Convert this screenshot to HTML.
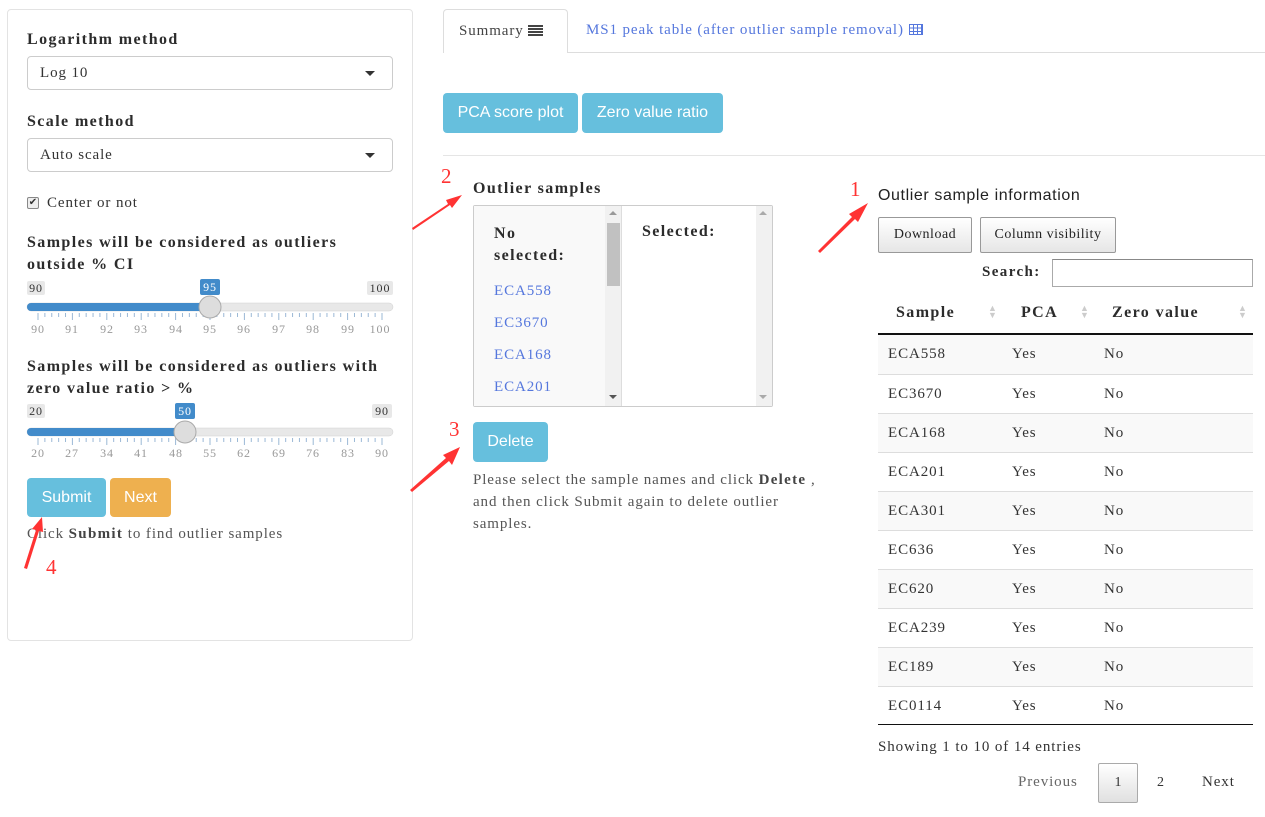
<!DOCTYPE html>
<html><head><meta charset="utf-8"><style>
*{box-sizing:border-box;margin:0;padding:0}
body{width:1265px;height:817px;background:#fff;font-family:"Liberation Serif",serif;color:#333;position:relative;overflow:hidden;font-size:15px;letter-spacing:0.9px}
.a{position:absolute;white-space:nowrap}
.b{font-weight:bold;color:#2c2c2c;font-size:16px;letter-spacing:1.4px}
.sel{position:absolute;left:27px;width:366px;height:34px;border:1px solid #ccc;border-radius:4px;padding:8px 12px;font-size:15px}
.sel:after{content:"";position:absolute;right:17px;top:14px;border:5px solid transparent;border-top:5px solid #333}
.btn{position:absolute;background:#66bfdd;color:#fff;font-family:"Liberation Sans",sans-serif;font-size:16px;border-radius:4px;text-align:center;letter-spacing:0}
.gb{position:absolute;border:1px solid #999;border-radius:2px;background:linear-gradient(#fff,#e6e6e6);font-size:14px;text-align:center;line-height:34px;color:#222;letter-spacing:0.5px}
.row{position:absolute;left:878px;width:375px;height:39px;border-top:1px solid #ddd;font-size:15px}
.row span{position:absolute;top:11px}
.link{color:#5577dd}
</style></head><body>
<!-- left panel -->
<div class="a" style="left:7px;top:9px;width:406px;height:632px;border:1px solid #e3e3e3;border-radius:4px;background:#fff"></div>
<div class="a b" style="left:27px;top:31px">Logarithm method</div>
<div class="sel" style="top:56px">Log 10</div>
<div class="a b" style="left:27px;top:113px">Scale method</div>
<div class="sel" style="top:138px">Auto scale</div>
<div class="a" style="left:27px;top:197px;width:12px;height:12px;border:1px solid #888;border-radius:2px;background:#eee;font-size:10px;line-height:10px;text-align:center;letter-spacing:0">✔</div>
<div class="a" style="left:47px;top:195px;font-size:15px">Center or not</div>
<div class="a b" style="left:27px;top:232px;line-height:22px">Samples will be considered as outliers<br>outside % CI</div>
<div class="a b" style="left:27px;top:356px;line-height:22px">Samples will be considered as outliers with<br>zero value ratio &gt; %</div>
<svg class="a" style="left:0;top:270px" width="420" height="70" font-family="Liberation Serif" font-size="12">
<rect x="27" y="11" width="18" height="14" rx="2" fill="#e8e8e8"/><text x="36" y="22" text-anchor="middle" fill="#333">90</text>
<rect x="367" y="11" width="26" height="14" rx="2" fill="#e8e8e8"/><text x="380" y="22" text-anchor="middle" fill="#333">100</text>
<rect x="200" y="9" width="20" height="16" rx="2" fill="#428bca"/><text x="210" y="21" text-anchor="middle" fill="#fff">95</text>
<rect x="27" y="33" width="366" height="8" rx="4" fill="#e8e8e8" stroke="#d0d0d0" stroke-width="0.5"/>
<rect x="27" y="33" width="183" height="8" rx="4" fill="#428bca"/>
<g stroke="#9bb8d6" id="t1"></g>
<text fill="#999" text-anchor="middle" y="63"><tspan x="38">90</tspan><tspan x="72">91</tspan><tspan x="107">92</tspan><tspan x="141">93</tspan><tspan x="176">94</tspan><tspan x="210">95</tspan><tspan x="244">96</tspan><tspan x="279">97</tspan><tspan x="313">98</tspan><tspan x="348">99</tspan><tspan x="380">100</tspan></text>
<circle cx="210" cy="37" r="11" fill="#ddd" stroke="#aaa"/>
</svg>
<svg class="a" style="left:0;top:395px" width="420" height="70" font-family="Liberation Serif" font-size="12">
<rect x="27" y="9" width="18" height="14" rx="2" fill="#e8e8e8"/><text x="36" y="20" text-anchor="middle" fill="#333">20</text>
<rect x="372" y="9" width="20" height="14" rx="2" fill="#e8e8e8"/><text x="382" y="20" text-anchor="middle" fill="#333">90</text>
<rect x="175" y="8" width="20" height="16" rx="2" fill="#428bca"/><text x="185" y="20" text-anchor="middle" fill="#fff">50</text>
<rect x="27" y="33" width="366" height="8" rx="4" fill="#e8e8e8" stroke="#d0d0d0" stroke-width="0.5"/>
<rect x="27" y="33" width="158" height="8" rx="4" fill="#428bca"/>
<g stroke="#9bb8d6" id="t2"></g>
<text fill="#999" text-anchor="middle" y="62"><tspan x="38">20</tspan><tspan x="72">27</tspan><tspan x="107">34</tspan><tspan x="141">41</tspan><tspan x="176">48</tspan><tspan x="210">55</tspan><tspan x="244">62</tspan><tspan x="279">69</tspan><tspan x="313">76</tspan><tspan x="348">83</tspan><tspan x="382">90</tspan></text>
<circle cx="185" cy="37" r="11" fill="#ddd" stroke="#aaa"/>
</svg>
<div class="btn" style="left:27px;top:478px;width:79px;height:39px;line-height:39px">Submit</div>
<div class="btn" style="left:110px;top:478px;width:61px;height:39px;line-height:39px;background:#eeb04f">Next</div>
<div class="a" style="left:27px;top:526px;color:#555">Click <b style="color:#444;letter-spacing:1.3px">Submit</b> to find outlier samples</div>

<!-- tabs -->
<div class="a" style="left:443px;top:52px;width:822px;border-top:1px solid #ddd"></div>
<div class="a" style="left:443px;top:9px;width:125px;height:44px;border:1px solid #ddd;border-bottom:none;border-radius:4px 4px 0 0;background:#fff;padding:13px 15px;color:#444">Summary <span style="display:inline-block;width:15px;height:11px;background:repeating-linear-gradient(#444 0 2px,#fff 2px 3px);vertical-align:-1px"></span></div>
<div class="a link" style="left:586px;top:22px">MS1 peak table (after outlier sample removal) <span style="display:inline-block;width:14px;height:11px;border:1px solid #5577dd;background:repeating-linear-gradient(90deg,transparent 0 3px,#5577dd 3px 4px),repeating-linear-gradient(transparent 0 2.5px,#5577dd 2.5px 3.5px);vertical-align:-1px"></span></div>
<div class="btn" style="left:443px;top:93px;width:135px;height:40px;line-height:40px">PCA score plot</div>
<div class="btn" style="left:582px;top:93px;width:141px;height:40px;line-height:40px">Zero value ratio</div>
<div class="a" style="left:443px;top:155px;width:822px;border-top:1px solid #e5e5e5"></div>

<!-- outlier samples -->
<div class="a b" style="left:473px;top:180px">Outlier samples</div>
<div class="a" style="left:473px;top:205px;width:300px;height:202px;border:1px solid #ccc;border-radius:2px;background:#fff"></div>
<div class="a" style="left:474px;top:206px;width:131px;height:200px;background:#f9f9f9"></div>
<div class="a" style="left:605px;top:206px;width:17px;height:200px;background:#f1f1f1;border-right:1px solid #ddd"></div>
<div class="a" style="left:607px;top:223px;width:13px;height:63px;background:#c1c1c1"></div>
<div class="a" style="left:756px;top:206px;width:16px;height:200px;background:#f1f1f1"></div>
<div class="a" style="left:609px;top:211px;border:4px solid transparent;border-bottom:4px solid #999;border-top:none"></div>
<div class="a" style="left:609px;top:395px;border:4px solid transparent;border-top:4px solid #555;border-bottom:none"></div>
<div class="a" style="left:759px;top:211px;border:4px solid transparent;border-bottom:4px solid #aaa;border-top:none"></div>
<div class="a" style="left:759px;top:395px;border:4px solid transparent;border-top:4px solid #aaa;border-bottom:none"></div>
<div class="a b" style="left:494px;top:223px;line-height:22px">No<br>selected:</div>
<div class="a b" style="left:642px;top:223px">Selected:</div>
<div class="a link" style="left:494px;top:283px">ECA558</div>
<div class="a link" style="left:494px;top:315px">EC3670</div>
<div class="a link" style="left:494px;top:347px">ECA168</div>
<div class="a link" style="left:494px;top:379px">ECA201</div>
<div class="btn" style="left:473px;top:422px;width:75px;height:40px;line-height:40px">Delete</div>
<div class="a" style="left:473px;top:469px;color:#555;line-height:22px">Please select the sample names and click <b style="color:#444;letter-spacing:1.3px">Delete</b> ,<br>and then click Submit again to delete outlier<br>samples.</div>

<!-- table -->
<div class="a" style="left:878px;top:187px;font-family:'Liberation Sans',sans-serif;font-size:16px;color:#222;letter-spacing:0.6px">Outlier sample information</div>
<div class="gb" style="left:878px;top:217px;width:94px;height:36px">Download</div>
<div class="gb" style="left:980px;top:217px;width:136px;height:36px">Column visibility</div>
<div class="a b" style="left:982px;top:264px;font-size:15px">Search:</div>
<div class="a" style="left:1052px;top:259px;width:201px;height:28px;border:1px solid #aaa;border-top-color:#888"></div>
<div class="a b" style="left:896px;top:304px;font-size:16px">Sample</div>
<div class="a b" style="left:1021px;top:304px;font-size:16px">PCA</div>
<div class="a b" style="left:1112px;top:304px;font-size:16px">Zero value</div>
<div class="a" style="left:988px;top:305px;color:#ccc;font-size:9px;line-height:7px;letter-spacing:0">▲<br>▼</div>
<div class="a" style="left:1080px;top:305px;color:#ccc;font-size:9px;line-height:7px;letter-spacing:0">▲<br>▼</div>
<div class="a" style="left:1238px;top:305px;color:#ccc;font-size:9px;line-height:7px;letter-spacing:0">▲<br>▼</div>
<div class="a" style="left:878px;top:333px;width:375px;border-top:2px solid #111"></div>
<div class="row" style="top:335px;background:#f9f9f9;border-top:none"><span style="left:10px">ECA558</span><span style="left:134px">Yes</span><span style="left:226px">No</span></div>
<div class="row" style="top:374px"><span style="left:10px">EC3670</span><span style="left:134px">Yes</span><span style="left:226px">No</span></div>
<div class="row" style="top:413px;background:#f9f9f9"><span style="left:10px">ECA168</span><span style="left:134px">Yes</span><span style="left:226px">No</span></div>
<div class="row" style="top:452px"><span style="left:10px">ECA201</span><span style="left:134px">Yes</span><span style="left:226px">No</span></div>
<div class="row" style="top:491px;background:#f9f9f9"><span style="left:10px">ECA301</span><span style="left:134px">Yes</span><span style="left:226px">No</span></div>
<div class="row" style="top:530px"><span style="left:10px">EC636</span><span style="left:134px">Yes</span><span style="left:226px">No</span></div>
<div class="row" style="top:569px;background:#f9f9f9"><span style="left:10px">EC620</span><span style="left:134px">Yes</span><span style="left:226px">No</span></div>
<div class="row" style="top:608px"><span style="left:10px">ECA239</span><span style="left:134px">Yes</span><span style="left:226px">No</span></div>
<div class="row" style="top:647px;background:#f9f9f9"><span style="left:10px">EC189</span><span style="left:134px">Yes</span><span style="left:226px">No</span></div>
<div class="row" style="top:686px"><span style="left:10px">EC0114</span><span style="left:134px">Yes</span><span style="left:226px">No</span></div>
<div class="a" style="left:878px;top:724px;width:375px;border-top:1px solid #111"></div>
<div class="a" style="left:878px;top:739px">Showing 1 to 10 of 14 entries</div>
<div class="a" style="left:1018px;top:774px;color:#666">Previous</div>
<div class="a" style="left:1098px;top:763px;width:40px;height:40px;border:1px solid #aaa;border-radius:2px;background:linear-gradient(#fff,#e0e0e0);text-align:center;line-height:38px;font-size:14px;letter-spacing:0">1</div>
<div class="a" style="left:1157px;top:775px;font-size:14px">2</div>
<div class="a" style="left:1202px;top:774px">Next</div>

<!-- annotations -->
<svg class="a" style="left:0;top:0" width="1265" height="817">
<g fill="#f33">
<polygon points="412,228 448,204 446,200 462,195 452,208 450,205 413,230"/>
<polygon points="818,251 852,217 849,214 868,203 858,222 855,219 820,253"/>
<polygon points="410,490 446,458 443,455 460,447 452,465 449,461 412,492"/>
<polygon points="24,568 36,530 32,529 42,517 43,532 39,531 27,569"/>
</g>
<g fill="#f33" font-family="Liberation Serif" font-size="21">
<text x="441" y="183">2</text><text x="850" y="196">1</text><text x="449" y="436">3</text><text x="46" y="574">4</text>
</g>
</svg>
<script>
function ticks(id,y){var g=document.getElementById(id),s='';for(var i=0;i<=50;i++){var x=38+i*(344/50);var maj=i%5==0;s+='<line x1="'+x+'" x2="'+x+'" y1="'+y+'" y2="'+(y+(maj?7:4))+'"/>'}g.innerHTML=s}
ticks('t1',43);ticks('t2',43);
</script>
</body></html>
